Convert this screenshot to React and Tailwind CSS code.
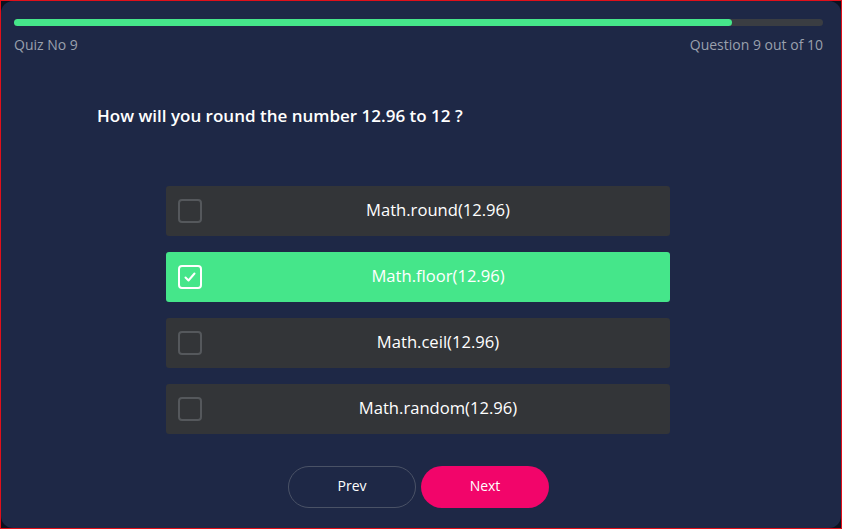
import React, { useState } from "react";

const options = [
  "Math.round(12.96)",
  "Math.floor(12.96)",
  "Math.ceil(12.96)",
  "Math.random(12.96)",
];

// Single answer row
const Option = ({ label, checked, onClick }) => (
  <button
    onClick={onClick}
    className={`flex items-center h-[50px] w-full rounded-[3px] px-3 ${
      checked ? "bg-[#45e68a]" : "bg-[#333538]"
    }`}
  >
    <span
      className={`flex items-center justify-center w-6 h-6 rounded-[4px] border-2 ${
        checked ? "border-white" : "border-[#55585c]"
      }`}
    >
      {checked && (
        <svg width="14" height="14" viewBox="0 0 14 14" fill="none">
          <path d="M2.5 7.5l3 3 6-7" stroke="white" strokeWidth="2" strokeLinecap="round" strokeLinejoin="round" />
        </svg>
      )}
    </span>
    <span className="flex-1 text-center text-white text-[16.6px] font-medium pl-4 -mt-[2px]">{label}</span>
  </button>
);

const App = () => {
  const [selected, setSelected] = useState(1);
  const progress = 88.8;

  return (
    <div
      className="w-[842px] h-[529px] border border-[#e0101a] bg-[#0d1120]"
      style={{ fontFamily: '"Open Sans", "Liberation Sans", sans-serif' }}
    >
      <div className="h-full rounded-xl bg-[#1e2846] pl-[13px] pr-[18px] pt-[18px]">
        <div className="h-[7px] w-full rounded-full bg-[#3a3d42]">
          <div className="h-full rounded-full bg-[#45e68a]" style={{ width: `${progress}%` }}></div>
        </div>
        <div className="flex justify-between mt-[9px] text-[14px] text-[#9aa0ad] leading-5">
          <span>Quiz No 9</span>
          <span>Question 9 out of 10</span>
        </div>

        <h2 className="ml-[83px] mt-[49px] text-white text-[17px] font-semibold leading-6">
          How will you round the number 12.96 to 12 ?
        </h2>

        <div className="ml-[152px] w-[504px] mt-[58px] flex flex-col gap-4">
          {options.map((opt, i) => (
            <Option key={opt} label={opt} checked={selected === i} onClick={() => setSelected(i)} />
          ))}
        </div>

        <div className="flex justify-center gap-[5px] mt-8 pr-0">
          <button className="w-32 h-[42px] rounded-full border border-[#4a5266] text-white text-[14px] font-medium pb-[3px]">
            Prev
          </button>
          <button className="w-32 h-[42px] rounded-full bg-[#f2056a] text-white text-[14px] font-medium pb-[3px]">
            Next
          </button>
        </div>
      </div>
    </div>
  );
};

export default App;
